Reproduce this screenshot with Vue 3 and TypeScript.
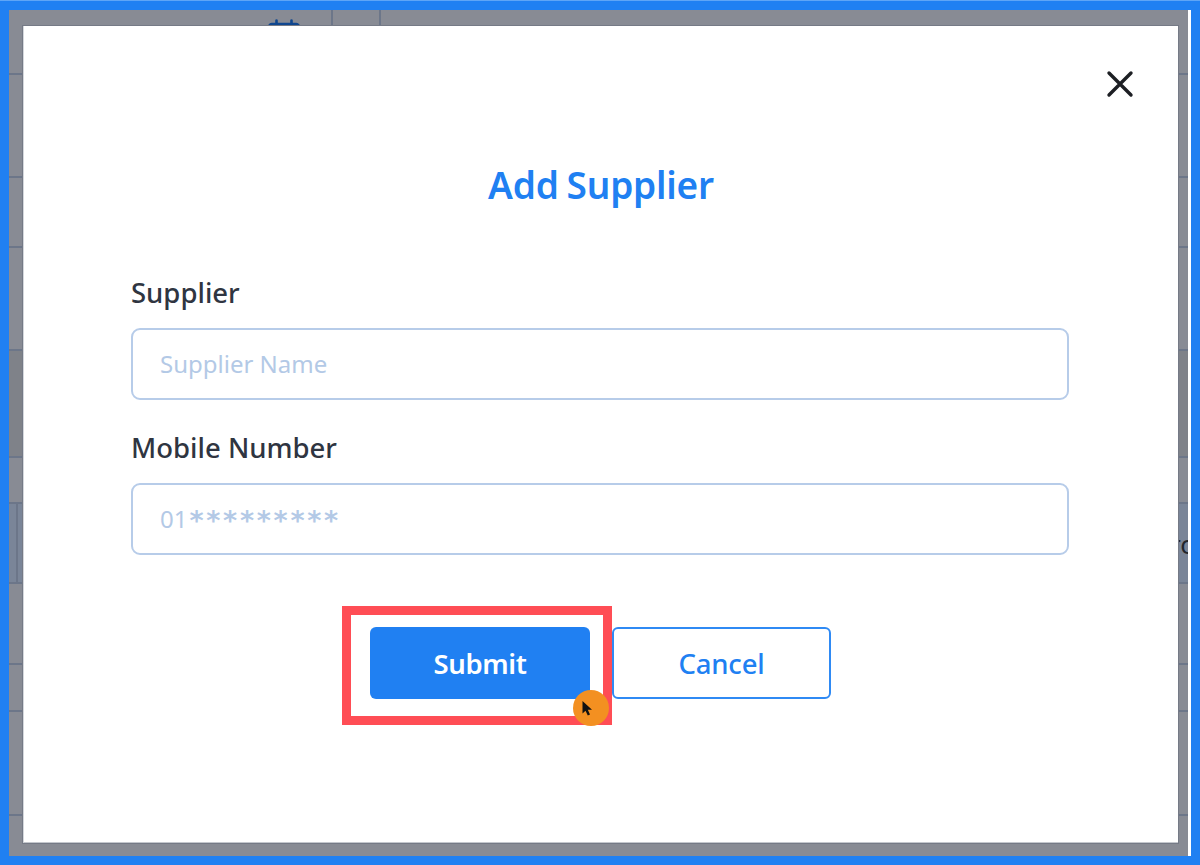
<script setup lang="ts">
const rows: { h: number; tone?: string }[] = [
  { h: 65, tone: 'top' },
  { h: 103 },
  { h: 70 },
  { h: 103 },
  { h: 107, tone: 'dark' },
  { h: 46 },
  { h: 80, tone: 'blue' },
  { h: 81 },
  { h: 47 },
  { h: 104 },
  { h: 40 }
]
</script>

<template>
  <div class="frame">
    <div class="canvas">
      <div class="backdrop">
        <div
          v-for="(row, i) in rows"
          :key="i"
          class="row"
          :class="row.tone"
          :style="{ height: row.h + 'px' }"
        >
          <template v-if="row.tone === 'top'">
            <svg class="calendar" width="34" height="16" viewBox="0 0 34 16" fill="none">
              <path d="M2 16V12a3 3 0 0 1 3-3h24a3 3 0 0 1 3 3v4" stroke="#10478f" stroke-width="2.6" />
              <path d="M9.5 5.500V10M24.500 5.500V10" stroke="#10478f" stroke-width="2.600" stroke-linecap="round" />
            </svg>
            <span class="vline first"></span>
            <span class="vline"></span>
          </template>
          <template v-if="row.tone === 'blue'">
            <span class="cell-line"></span>
            <span class="edge-text">ro</span>
          </template>
        </div>
      </div>

      <div class="modal">
        <div class="close-row">
          <svg class="close" width="28" height="28" viewBox="0 0 28 28" fill="none">
            <path d="M3 3L25 25M25 3L3 25" stroke="#1d1f24" stroke-width="3.4" stroke-linecap="round" />
          </svg>
        </div>
        <h1 class="title">Add Supplier</h1>
        <form class="form" @submit.prevent>
          <label class="label">Supplier</label>
          <input class="field" type="text" placeholder="Supplier Name" />
          <label class="label second">Mobile Number</label>
          <div class="field masked">
            <span>01</span><span class="stars">*********</span>
          </div>
          <div class="actions">
            <div class="submit-wrap">
              <button class="btn primary" type="button">Submit</button>
              <span class="highlight"></span>
              <span class="pointer">
                <svg width="13" height="17" viewBox="0 0 13 17">
                  <path d="M1.500 1V13.500L4.500 10.800L6.800 15.500L9 14.500L6.800 9.800H11Z" fill="#111" />
                </svg>
              </span>
            </div>
            <button class="btn ghost" type="button">Cancel</button>
          </div>
        </form>
      </div>
    </div>
  </div>
</template>

<style>
html,
body {
  margin: 0;
  background: #2080f2;
}
</style>

<style scoped>
.frame {
  width: 1200px;
  height: 865px;
  box-sizing: border-box;
  padding: 10px 9px 9px;
  background: #2080f2;
  border-top: 1px solid #5fa5f6;
  overflow: hidden;
  font-family: "Noto Sans", "Open Sans", sans-serif;
}
.canvas {
  position: relative;
  width: 1182px;
  height: 846px;
  margin-top: -1px;
  box-sizing: border-box;
  border-right: 3px solid #ffffff;
  background: #888b94;
  overflow: hidden;
}
.backdrop {
  display: flex;
  flex-direction: column;
}
.row {
  position: relative;
  flex: none;
  box-sizing: border-box;
  border-bottom: 2px solid #6c7689;
  display: flex;
}
.row:last-child {
  border-bottom: 0;
}
.row.dark {
  background: #7f8289;
}
.row.blue {
  background: #7a8598;
}
.calendar {
  position: absolute;
  left: 258px;
  top: 5px;
}
.vline {
  position: absolute;
  left: 370px;
  top: 0;
  bottom: 0;
  width: 2px;
  background: #6c7689;
}
.vline.first {
  left: 322px;
}
.cell-line {
  position: absolute;
  left: 7px;
  top: 0;
  bottom: 0;
  width: 2px;
  background: #6c7689;
}
.edge-text {
  position: absolute;
  left: 1161px;
  top: 22px;
  font-size: 26px;
  line-height: 36px;
  color: #22252b;
}
.modal {
  position: absolute;
  left: 14px;
  top: 16px;
  width: 1155px;
  height: 817px;
  box-sizing: border-box;
  background: #ffffff;
  border-left: 1px solid #d4d7dc;
  border-bottom: 1px solid #c4c7cd;
  box-shadow: 0 0 0 1px #757a86;
  padding: 0 107px 0 107px;
  display: flex;
  flex-direction: column;
}
.close-row {
  display: flex;
  justify-content: flex-end;
  height: 28px;
  margin: 44px -63px 0 0;
}
.close {
  flex: none;
}
.title {
  margin: 64px 0 0;
  height: 46px;
  font-size: 37px;
  line-height: 46px;
  font-weight: 600;
  letter-spacing: -0.2px;
  word-spacing: -1.5px;
  text-align: center;
  color: #2080f2;
}
.form {
  display: flex;
  flex-direction: column;
}
.label {
  margin-top: 67px;
  height: 36px;
  font-size: 27.5px;
  line-height: 36px;
  font-weight: 500;
  color: #2f3541;
}
.label.second {
  margin-top: 30px;
}
.field {
  margin-top: 17px;
  width: 938px;
  height: 72px;
  box-sizing: border-box;
  border: 2px solid #b7cce9;
  border-radius: 9px;
  padding: 0 27px 2px;
  background: #ffffff;
  font-family: inherit;
  font-size: 24px;
  color: #2f3541;
  outline: none;
}
.field::placeholder {
  color: #b3c9e6;
  opacity: 1;
}
.masked {
  display: flex;
  align-items: center;
  color: #b3c9e6;
}
.stars {
  font-family: "DejaVu Sans", sans-serif;
  font-size: 27px;
  font-weight: 700;
  line-height: 1;
  letter-spacing: 2.7px;
  margin-left: 2px;
  transform: translateY(2px);
}
.actions {
  margin: 72px 0 0 238px;
  display: flex;
  gap: 22px;
}
.submit-wrap {
  position: relative;
  width: 221px;
  height: 72px;
}
.btn {
  box-sizing: border-box;
  height: 72px;
  border-radius: 6px;
  font-family: inherit;
  font-size: 27.5px;
  font-weight: 600;
  letter-spacing: -0.4px;
  padding: 0;
  cursor: pointer;
}
.primary {
  width: 220px;
  margin-left: 1px;
  border: 0;
  background: #2080f2;
  color: #ffffff;
}
.ghost {
  width: 219px;
  border: 2px solid #2f8af4;
  background: #ffffff;
  color: #2080f2;
  font-weight: 500;
  letter-spacing: -0.2px;
}
.highlight {
  position: absolute;
  left: -27px;
  top: -21px;
  width: 270px;
  height: 119px;
  box-sizing: border-box;
  border: 9px solid #ff4d55;
  pointer-events: none;
}
.pointer {
  position: absolute;
  left: 204px;
  top: 63px;
  width: 36px;
  height: 36px;
  border-radius: 50%;
  background: #f39021;
  display: flex;
  align-items: center;
  justify-content: center;
}
.pointer svg {
  margin-left: -7px;
}
</style>
